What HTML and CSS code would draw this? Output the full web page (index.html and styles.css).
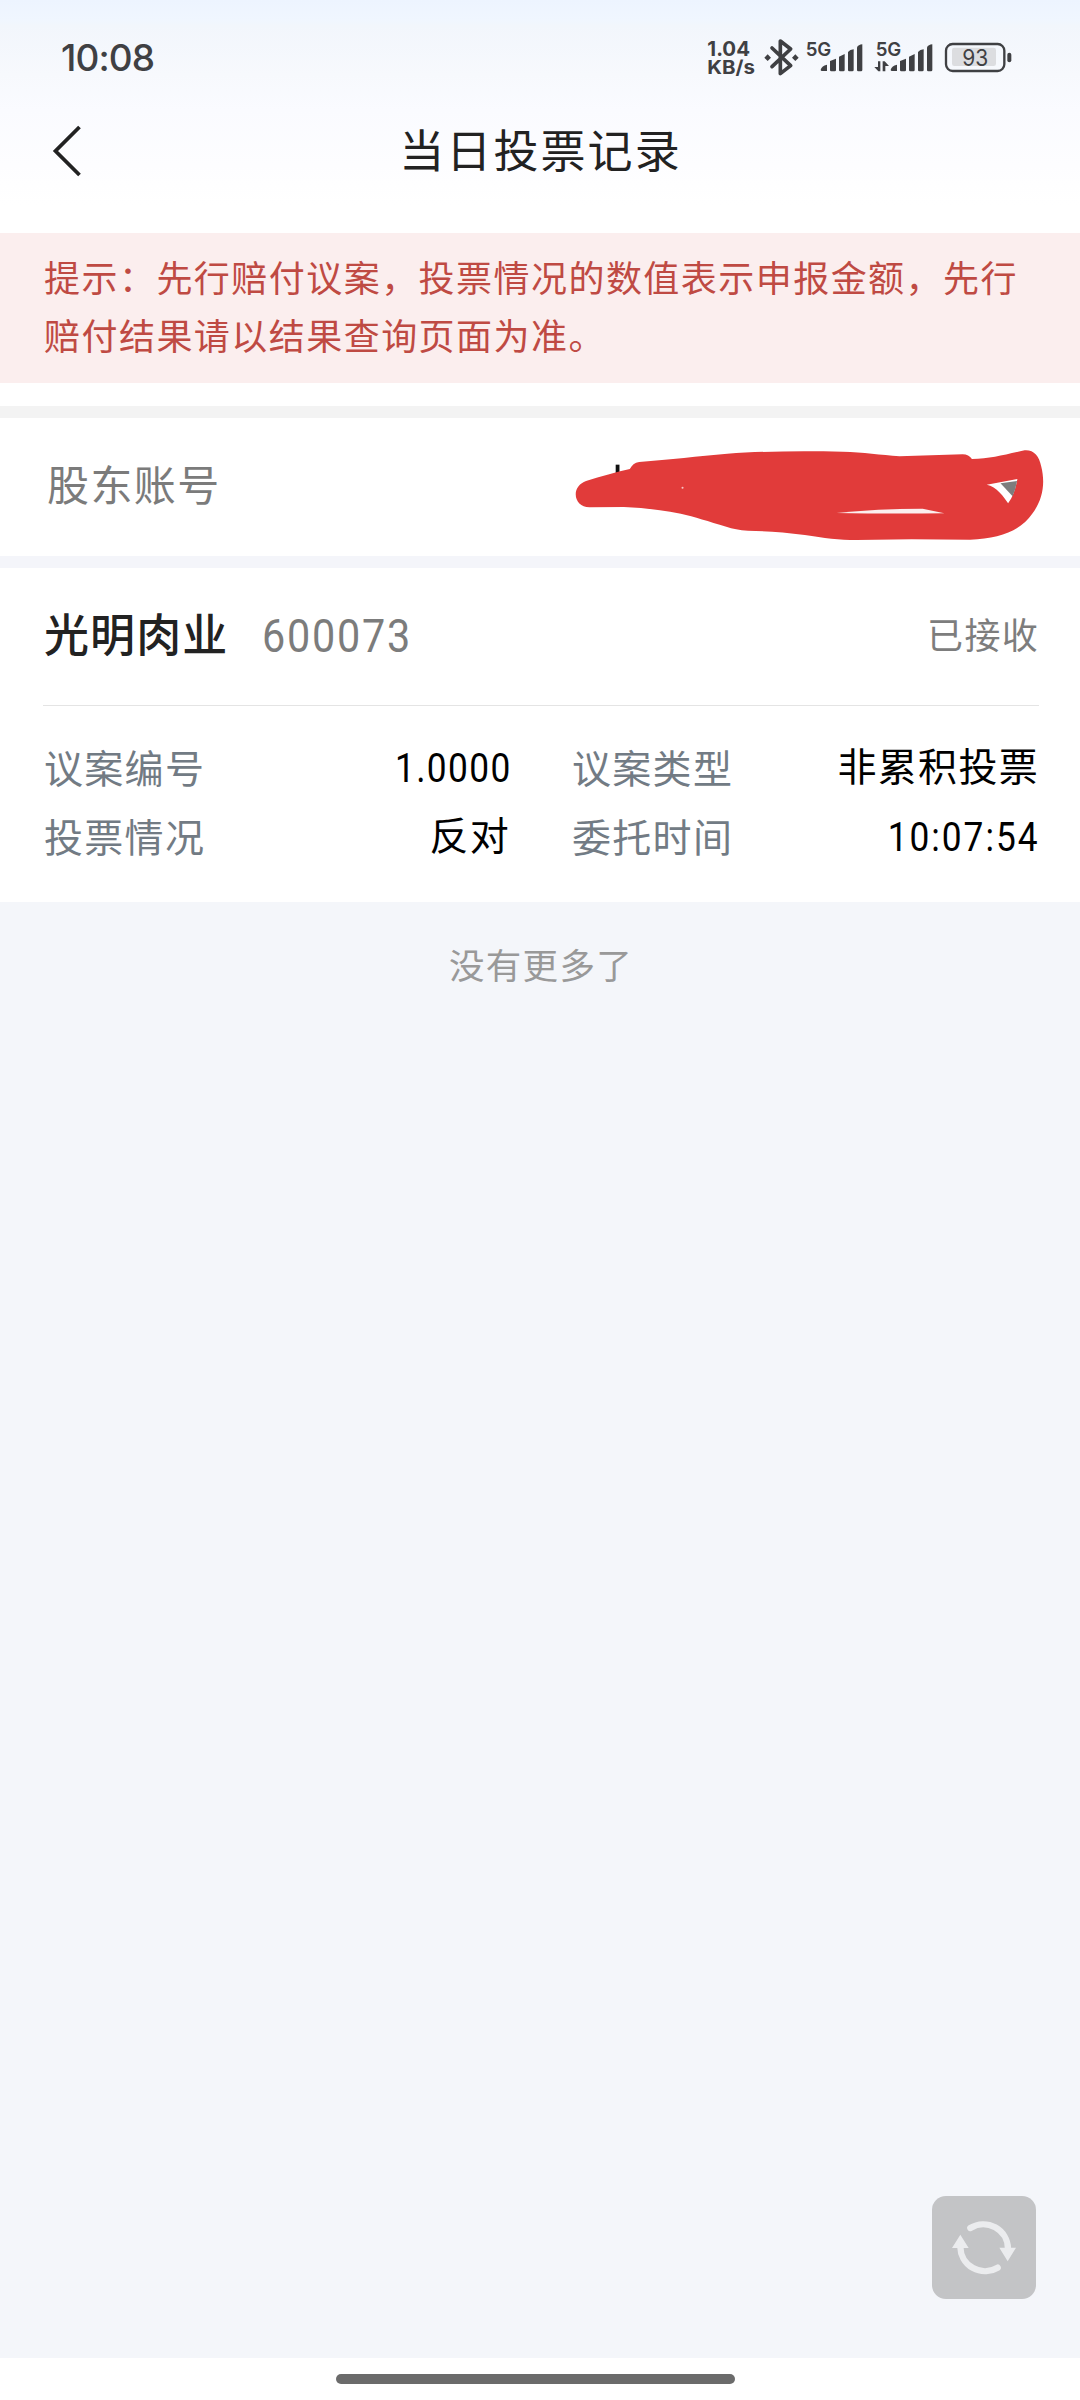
FILE: index.html
```html
<!DOCTYPE html>
<html lang="zh-CN">
<head>
<meta charset="utf-8">
<title>当日投票记录</title>
<link rel="stylesheet" href="styles.css">
</head>
<body>
<div class="screen">
  <header class="top">
    <div class="status">
      <span class="clock">10:08</span>
      <svg class="status-icons" viewBox="0 0 1020 240" fill="#3f4043">
        <g class="status-text">
          <text x="52" y="107" font-size="61" font-weight="700" textLength="128" lengthAdjust="spacingAndGlyphs">1.04</text>
          <text x="52" y="161" font-size="57" font-weight="700" textLength="143" lengthAdjust="spacingAndGlyphs">KB/s</text>
          <text x="347" y="108" font-size="58" font-weight="600" textLength="77" lengthAdjust="spacingAndGlyphs">5G</text>
          <text x="557" y="108" font-size="58" font-weight="600" textLength="77" lengthAdjust="spacingAndGlyphs">5G</text>
        </g>
        <path d="M246 84 L302 137 L271 161 V63 L302 87 L246 140" fill="none" stroke="#3f4043" stroke-width="11" stroke-linejoin="round" stroke-linecap="round"/>
        <path d="M233 103 l10 10 l-10 10 l-10 -10z M316 103 l10 10 l-10 10 l-10 -10z"/>
        <g id="bars">
          <path d="M392 150 Q394 138 411 134 V153 H396 Q392 153 392 150z"/>
          <path d="M420 123 L438 116 V150 Q438 154 434 154 H424 Q420 154 420 150z"/>
          <path d="M447 110 L464 102 V150 Q464 154 460 154 H451 Q447 154 447 150z"/>
          <path d="M474 96 Q480 89 491 88 V150 Q491 154 487 154 H478 Q474 154 474 150z"/>
          <path d="M501 82 Q505 74 517 73 V150 Q517 154 513 154 H505 Q501 154 501 150z"/>
        </g>
        <use href="#bars" x="210"/>
        <path d="M564 124 h7 v30 h-6 L553 141 h11z M578 124 h6 l13 14 h-11 v16 h-8z"/>
        <rect x="786" y="83" width="132" height="55" rx="7" fill="#dcdde0"/>
        <rect x="768" y="72" width="175" height="81" rx="20" fill="none" stroke="#3f4043" stroke-width="7"/>
        <rect x="952" y="98" width="12" height="29" rx="6"/>
        <text class="status-text" x="817" y="137" font-size="68" font-weight="400" textLength="78" lengthAdjust="spacingAndGlyphs">93</text>
      </svg>
    </div>
    <div class="nav">
      <svg class="back" viewBox="0 0 30 52"><path d="M27.500 2 L3.500 26 L27.500 50" fill="none" stroke="#222" stroke-width="3.800"/></svg>
      <h1 class="title">当日投票记录</h1>
    </div>
  </header>

  <p class="notice">提示：先行赔付议案，投票情况的数值表示申报金额，先行<br>赔付结果请以结果查询页面为准。</p>

  <section class="account">
    <span class="account-label">股东账号</span>
    <svg class="scribble" viewBox="100 680 1370 285" preserveAspectRatio="none">
      <rect x="221" y="733" width="11" height="34" fill="#111"/>
      <path fill="#e13b3a" d="M105 822 C105 803 117 789 135 782 C180 768 220 756 262 746 C268 735 276 727 289 725 C380 717 460 708 545 700 C650 692 770 692 880 694 C940 696 990 703 1045 708 L1228 702 C1240 702 1249 707 1255 716 C1310 715 1350 703 1408 690 C1434 688 1450 706 1456 738 C1469 790 1460 840 1430 880 C1398 930 1335 955 1250 958 L1080 957 L920 959 C870 959 825 953 770 944 C710 935 650 932 605 931 C580 929 560 925 542 919 C490 903 450 889 410 880 C350 869 300 862 245 860 L145 861 C120 861 105 844 105 822Z"/>
      <path fill="#fff" d="M1298 793 L1387 776 C1382 804 1374 830 1360 849 C1349 832 1326 797 1298 793Z"/>
      <path fill="#7d7d7d" d="M1338 789 L1386 782 Q1382 806 1373 828Z"/>
      <path fill="#fbefef" d="M862 878 Q980 865 1112 865 L1175 879 Q1010 881 862 878Z"/>
      <circle cx="415" cy="802" r="3" fill="#f6c4c4"/>
    </svg>
  </section>

  <article class="card">
    <div class="card-head">
      <span class="name">光明肉业</span>
      <span class="code">600073</span>
      <span class="state">已接收</span>
    </div>
    <dl class="details">
      <div class="item"><dt>议案编号</dt><dd class="num">1.0000</dd></div>
      <div class="item"><dt>议案类型</dt><dd>非累积投票</dd></div>
      <div class="item"><dt>投票情况</dt><dd>反对</dd></div>
      <div class="item"><dt>委托时间</dt><dd class="num time">10:07:54</dd></div>
    </dl>
  </article>

  <main class="rest">
    <p class="end">没有更多了</p>
    <button class="refresh" aria-label="刷新">
      <svg viewBox="0 0 312 309" width="104" height="103">
        <g fill="none" stroke="#ebecee" stroke-width="19" stroke-linecap="round">
          <path d="M115 96 A74 74 0 0 1 228 158"/>
          <path d="M197 215 A74 74 0 0 1 85 153"/>
        </g>
        <path fill="#ebecee" d="M202 155 H252 L227 196z M60 156 H110 L85 116z"/>
      </svg>
    </button>
  </main>
  <footer class="gesture"><span class="pill"></span></footer>
</div>
</body>
</html>
```

FILE: styles.css
```css
* { box-sizing: border-box; margin: 0; padding: 0; }
body {
  width: 1080px;
  font-family: "Noto Sans CJK SC", sans-serif;
  background: #fff;
}
.screen { display: flex; flex-direction: column; width: 1080px; height: 2400px; }
.top {
  height: 233px;
  background: linear-gradient(#edf4ff 0, #f0f6ff 20px, #f2f6fc 26px, #f7f9fd 75px, #fafbff 110px, #fdfdff 165px, #fff 205px);
}
.status {
  display: flex;
  justify-content: space-between;
  height: 100px;
  padding: 20px 50px 0 61px;
}
.clock {
  font: 500 37px/75px Inter, sans-serif;
  letter-spacing: -0.9px;
  color: #3f4043;
}
.status-icons { width: 340px; height: 80px; }
.status-text { font-family: Inter, sans-serif; }
.nav {
  display: grid;
  grid-template-columns: 80px 1fr 80px;
  align-items: center;
  height: 102px;
  padding: 0 0 0 1px;
}
.back { width: 30px; height: 52px; margin-left: 51px; }
.title {
  padding-bottom: 4px;
  font-size: 45px;
  line-height: 96px;
  font-weight: 400;
  letter-spacing: 2.100px;
  text-align: center;
  color: #222;
}
.notice {
  height: 150px;
  padding: 14px 0 0 44px;
  background: #fbeeee;
  color: #bf4a43;
  font-size: 36px;
  line-height: 58px;
  letter-spacing: 1.460px;
  white-space: nowrap;
}
.account {
  display: flex;
  align-items: center;
  justify-content: space-between;
  height: 162px;
  margin-top: 23px;
  padding: 0 34px 5px 47px;
  border-top: 12px solid #f3f3f3;
  border-bottom: 12px solid #f4f5fa;
}
.account-label { padding-bottom: 5px; font-size: 42px; letter-spacing: 1.400px; color: #7b7b7b; }
.scribble { width: 472px; height: 95px; margin-top: 19px; }
.card { height: 334px; padding: 0 41px 0 43px; }
.card-head {
  display: flex;
  align-items: center;
  height: 138px;
  padding: 0 0 8px 1px;
  border-bottom: 1px solid #e4e4e4;
}
.name { font-size: 45px; font-weight: 500; letter-spacing: 1.100px; color: #222; }
.code {
  margin-left: 34px;
  padding-top: 5px;
  font-family: Roboto, sans-serif;
  font-size: 47px;
  font-weight: 400;
  letter-spacing: 2px;
  color: #7c7c7c;
  transform: scaleX(0.88);
  transform-origin: left;
}
.state { margin-left: auto; font-size: 36px; letter-spacing: 1.300px; color: #7d7d7d; }
.details {
  display: grid;
  grid-template-columns: 467px 468px;
  justify-content: space-between;
  grid-auto-rows: 69px;
  padding-top: 26px;
}
.item { display: flex; justify-content: space-between; line-height: 69px; font-size: 39px; letter-spacing: 1.300px; }
dt { padding-left: 1px; color: #727b84; }
dd { margin-top: -2px; color: #000; }
.num {
  margin: 2px -2px 0 0;
  font-family: Roboto, sans-serif;
  font-size: 41px;
  letter-spacing: 1.600px;
  transform: scaleX(0.86);
  transform-origin: right;
}
.time { margin-right: -1px; letter-spacing: 2.300px; }
.rest { display: flex; flex-direction: column; height: 1456px; background: #f4f6fa; }
.end { padding: 35px 0 0 2px; font-size: 35.500px; line-height: 54px; letter-spacing: 1.300px; text-align: center; color: #999; }
.refresh {
  align-self: flex-end;
  width: 104px;
  height: 103px;
  margin: auto 44px 59px 0;
  border: 0;
  border-radius: 14px;
  background: #c3c4c6;
}
.refresh svg { display: block; }
.gesture { display: flex; justify-content: center; height: 42px; padding: 16px 9px 0 0; }
.pill { width: 399px; height: 10px; border-radius: 5px; background: #6b6b6b; }
```
